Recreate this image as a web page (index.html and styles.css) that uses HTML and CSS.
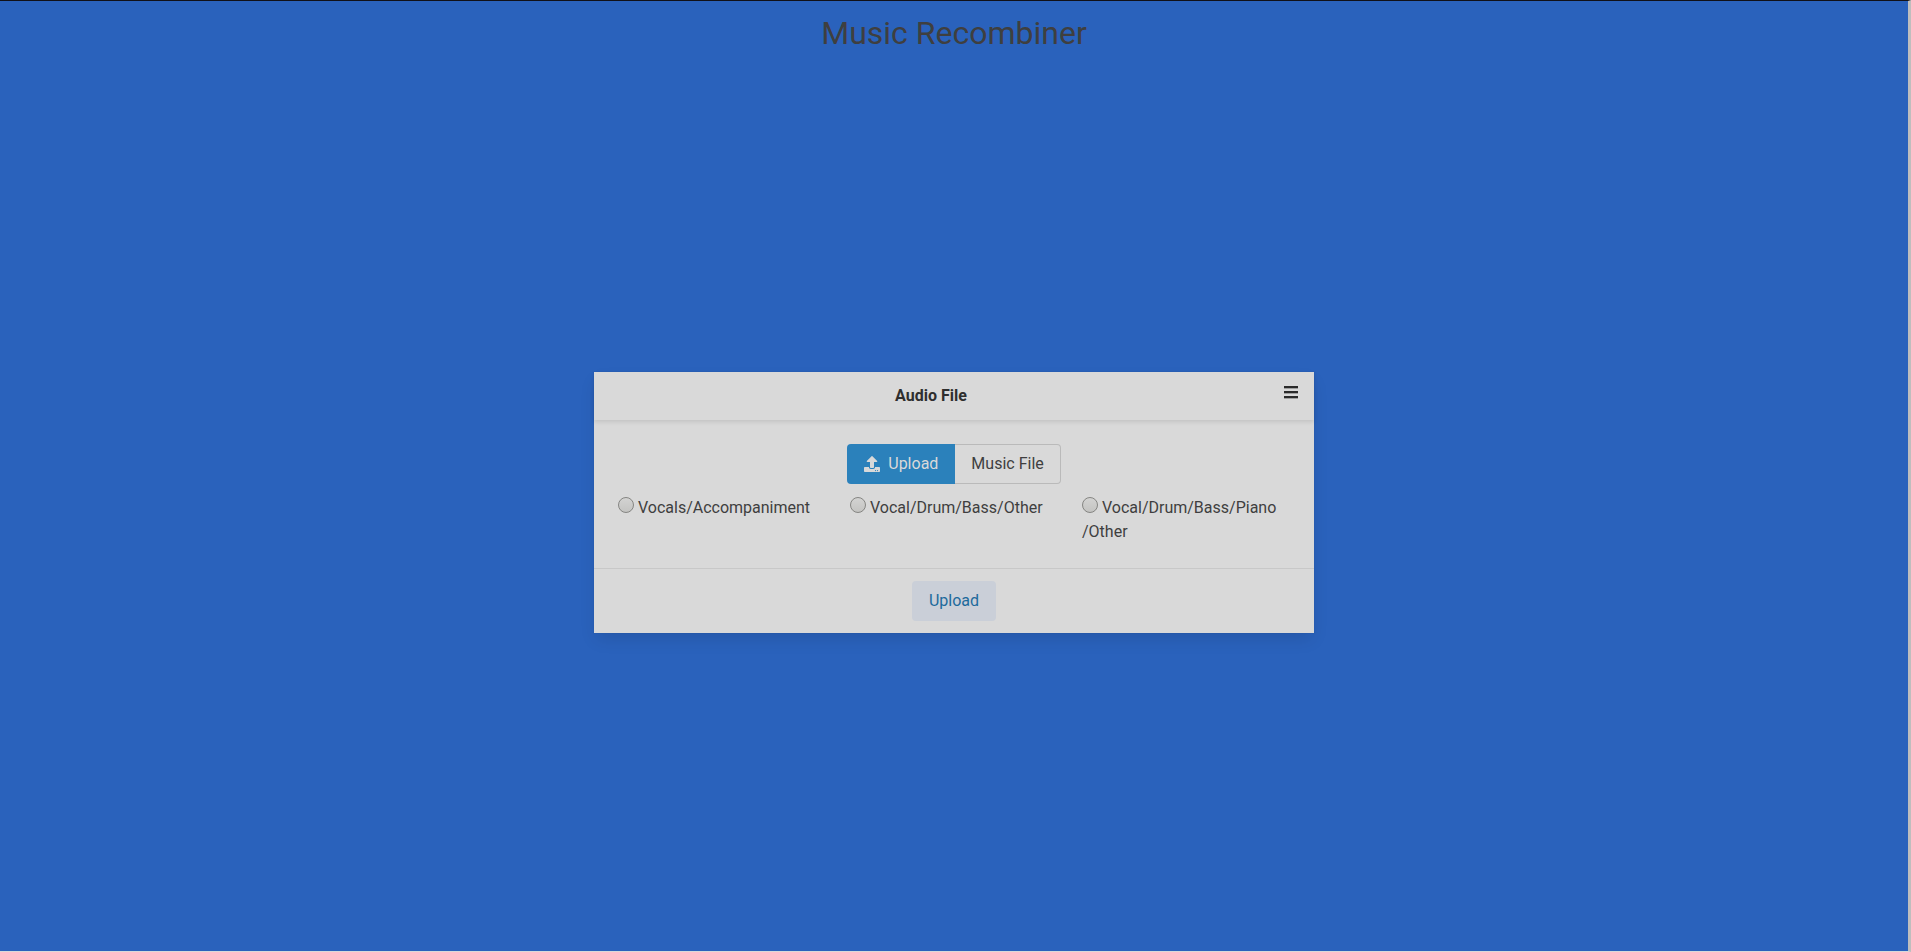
FILE: index.html
```html
<!DOCTYPE html>
<html lang="en">
<head>
<meta charset="utf-8">
<title>Music Recombiner</title>
<link rel="stylesheet" href="styles.css">
</head>
<body>
<div class="page">
  <h1 class="title">Music Recombiner</h1>
  <main class="hero">
    <form class="card">
      <header class="card-header">
        <p class="card-title">Audio File</p>
        <button class="menu" type="button" aria-label="Menu">
          <svg width="14" height="14" viewBox="0 0 14 14" aria-hidden="true">
            <path fill="#9f9f9f" d="M0 3h14v1H0zM0 8h14v1H0zM0 13h14v1H0z"/>
            <path fill="#2a2a2a" d="M0 1h14v2H0zM0 6h14v2H0zM0 11h14v2H0z"/>
          </svg>
        </button>
      </header>
      <div class="card-content">
        <div class="file">
          <button class="file-cta" type="button">
            <svg width="16" height="16" viewBox="0 0 512 512" aria-hidden="true"><path fill="currentColor" d="M296 384h-80c-13.300 0-24-10.700-24-24V192h-87.700c-17.800 0-26.700-21.500-14.100-34.100L242.300 5.700c7.500-7.500 19.800-7.500 27.300 0l152.200 152.200c12.600 12.600 3.700 34.100-14.100 34.100H320v168c0 13.300-10.700 24-24 24zm216-8v112c0 13.300-10.700 24-24 24H24c-13.300 0-24-10.700-24-24V376c0-13.300 10.700-24 24-24h136v8c0 30.900 25.100 56 56 56h80c30.900 0 56-25.100 56-56v-8h136c13.300 0 24 10.700 24 24zm-124 88c0-11-9-20-20-20s-20 9-20 20 9 20 20 20 20-9 20-20zm64 0c0-11-9-20-20-20s-20 9-20 20 9 20 20 20 20-9 20-20z"/></svg>
            <span>Upload</span>
          </button>
          <span class="file-name">Music File</span>
        </div>
        <div class="options">
          <label class="option"><input class="radio" type="radio" name="stems"> Vocals/Accompaniment</label>
          <label class="option"><input class="radio" type="radio" name="stems"> Vocal/Drum/Bass/Other</label>
          <label class="option"><input class="radio" type="radio" name="stems"> Vocal/Drum/Bass/Piano<wbr>/Other</label>
        </div>
      </div>
      <footer class="card-footer">
        <button class="submit" type="submit">Upload</button>
      </footer>
    </form>
  </main>
</div>
</body>
</html>
```
FILE: styles.css
```css
* { box-sizing: border-box; margin: 0; }

body {
  min-height: 100vh;
  display: flex;
  background: #d9d9d9;
  border-top: 1px solid #111118;
  border-right: 3px solid #bebebe;
  border-bottom: 1px solid #d9d9d9;
  color: #3f3f3f;
  font: 16px/24px Roboto, sans-serif;
}

button { font: inherit; border: 0; cursor: pointer; }

.page {
  flex: 1;
  display: flex;
  flex-direction: column;
  background: #2a62bc;
}

.title {
  padding: 12px 0 1px;
  font-size: 32px;
  font-weight: 400;
  line-height: 40px;
  text-align: center;
}

.hero {
  flex: 1;
  display: flex;
  align-items: center;
  justify-content: center;
}

.card {
  width: 100%;
  max-width: 720px;
  background: #d9d9d9;
  box-shadow: 0 8px 16px -2px rgba(10, 10, 10, 0.1), 0 0 0 1px rgba(10, 10, 10, 0.02);
}

.card-header {
  position: relative;
  display: flex;
  box-shadow: 0 2px 4px rgba(10, 10, 10, 0.1);
}

.card-title {
  flex: 1;
  padding: 12px 62px 12px 16px;
  color: #2e2e2e;
  font-weight: 700;
  text-align: center;
}

.menu {
  position: absolute;
  top: 0;
  right: 0;
  padding: 13px 16px;
  background: none;
  line-height: 0;
}

.card-content { padding: 24px; }

.file {
  display: flex;
  justify-content: center;
}

.file-cta {
  display: flex;
  align-items: center;
  gap: 8px;
  height: 40px;
  padding: 0 17px;
  border-radius: 4px 0 0 4px;
  background: #2b81bb;
  color: #d9d9d9;
}

.file-name {
  height: 40px;
  padding: 7px 16px;
  border: 1px solid #bababa;
  border-left: 0;
  border-radius: 0 4px 4px 0;
}

.options {
  display: grid;
  grid-template-columns: repeat(3, 1fr);
  gap: 24px;
  padding-top: 12px;
}

.option { white-space: nowrap; }

.radio {
  appearance: none;
  width: 16px;
  height: 16px;
  border: 1px solid #858582;
  border-radius: 50%;
  background: linear-gradient(#d3d3d2, #c4c4c2);
  vertical-align: baseline;
}

.radio:checked { background: radial-gradient(#2e2e2e 30%, #cccccb 35%); }

.card-footer {
  display: flex;
  justify-content: center;
  padding: 12px;
  border-top: 1px solid #c8c8c8;
}

.submit {
  height: 40px;
  padding: 0 17px;
  border-radius: 4px;
  background: #cacfd8;
  color: #1d6a9c;
}
```
